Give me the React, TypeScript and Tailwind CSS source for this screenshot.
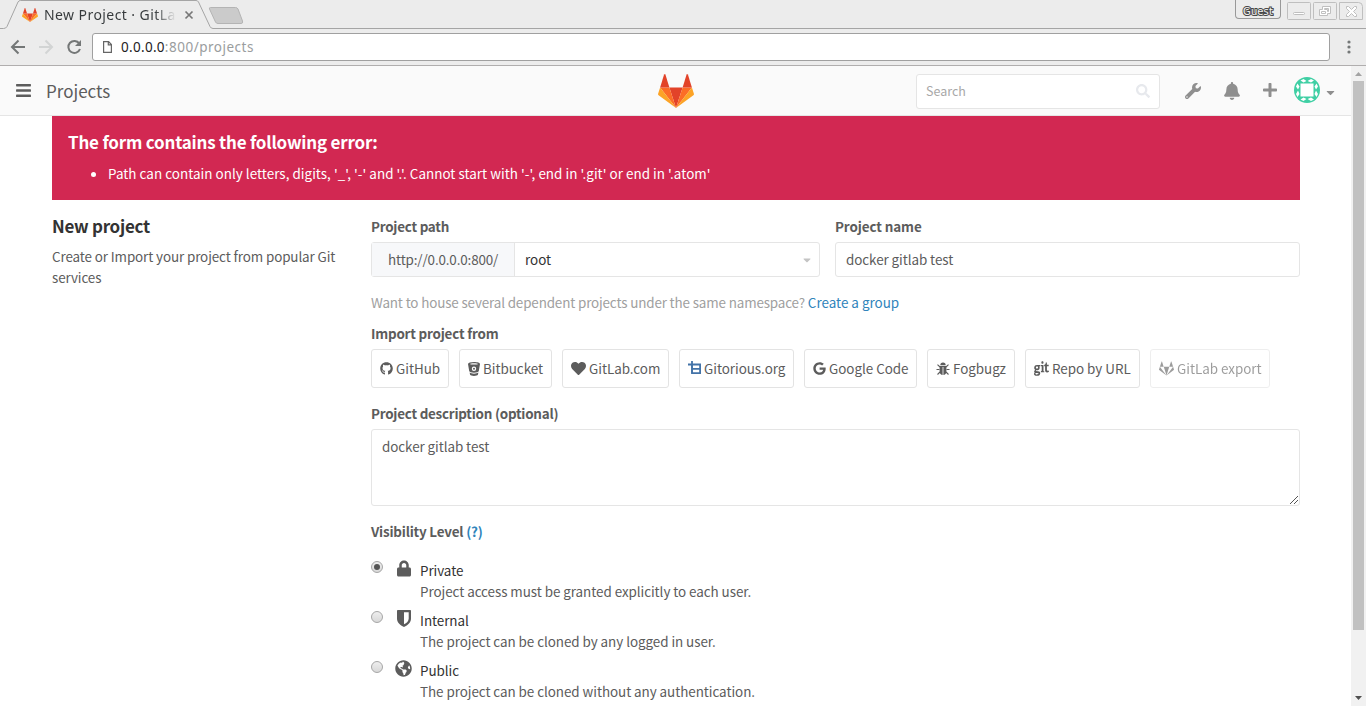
import type { ReactNode } from "react";
import {
  FaBars,
  FaBell,
  FaCaretDown,
  FaGit,
  FaGithub,
  FaGitlab,
  FaGlobeAmericas,
  FaGoogle,
  FaHeart,
  FaLock,
  FaPlus,
  FaSearch,
  FaWrench,
} from "react-icons/fa";

function Tanuki({ className }: { className: string }) {
  return (
    <svg className={className} viewBox="0 0 36 33" preserveAspectRatio="none">
      <path d="M18 33 11.4 13h13.2z" fill="#e24329" />
      <path d="M18 33 11.4 13H2.1z" fill="#fc6d26" />
      <path d="M2.1 13 .1 19.1c-.2.6 0 1.2.5 1.5L18 33z" fill="#fca326" />
      <path d="M2.1 13h9.3L7.4.6C7.2 0 6.300 0 6.100.6z" fill="#e24329" />
      <path d="M18 33l6.600-20h9.300z" fill="#fc6d26" />
      <path d="m33.900 13 2 6.100c.2.6 0 1.200-.5 1.500L18 33z" fill="#fca326" />
      <path d="M33.900 13h-9.300L28.600.6c.2-.6 1.100-.6 1.300 0z" fill="#e24329" />
    </svg>
  );
}

function Bitbucket() {
  return (
    <svg className="h-[14px] w-[12px]" viewBox="0 0 12 14">
      <path
        fill="currentColor"
        fillRule="evenodd"
        d="M0 2C0 .7 2.700 0 6 0s6 .7 6 2l-1.200 7c-.3 1-2.300 1.700-4.800 1.700S1.500 10 1.200 9zM2 1.900c0 .4 1.800.7 4 .7s4-.3 4-.7-1.800-.7-4-.7-4 .3-4 .7zm4 2.700a2.200 2.200 0 1 0 0 4.400 2.200 2.200 0 0 0 0-4.400zm0 1.200a1 1 0 1 1 0 2 1 1 0 0 1 0-2zM1.600 10.600c1 .7 2.600 1.100 4.400 1.100s3.400-.4 4.400-1.100l-.5 2.200C9.500 13.500 8 14 6 14s-3.500-.5-3.900-1.200z"
      />
    </svg>
  );
}

function Gitorious() {
  return (
    <svg className="-mt-[2px] h-[14px] w-[13px]" viewBox="0 0 13 14" fill="none" stroke="#4373a8">
      <path strokeWidth="1.800" d="M0 3.500h12.100v8.700H4V0M4 7.800h8" />
      <path strokeWidth="1.600" d="M4 3v9.300" />
    </svg>
  );
}

function Bug() {
  return (
    <svg className="h-[14px] w-[14px]" viewBox="0 0 14 14">
      <path fill="currentColor" d="M4.300 3.200a2.700 2.700 0 0 1 5.400 0zM3.600 4h6.800v5.500c0 2-1.400 3.500-3 3.500V5h-.8v8c-1.600 0-3-1.500-3-3.500z" />
      <path
        fill="none"
        stroke="currentColor"
        strokeWidth="1.100"
        d="M1.500 2.700 4 5M12.500 2.700 10 5M.5 7.500h3M13.500 7.500h-3M1.500 12.500 4 10M12.500 12.500 10 10"
      />
    </svg>
  );
}

function Shield() {
  return (
    <svg className="h-[17px] w-[14px]" viewBox="0 0 14 17">
      <path
        fill="currentColor"
        fillRule="evenodd"
        d="M.8 0h12.400c.5 0 .8.3.8.800V8.500c0 4-3 6.800-7 8.500-4-1.700-7-4.500-7-8.500V.8C0 .3.300 0 .8 0zM7 2.300v12c2.700-1.300 4.700-3.200 4.700-5.800V2.300z"
      />
    </svg>
  );
}

function Avatar() {
  return (
    <svg className="size-[26px]" viewBox="0 0 26 26">
      <defs>
        <clipPath id="round">
          <circle cx="13" cy="13" r="13" />
        </clipPath>
      </defs>
      <g clipPath="url(#round)">
        <path fill="#3fcfa4" d="M0 0h26v26H0z" />
        <path fill="#fff" d="M6.500 6.500h13v13h-13z" />
        <path
          fill="#fff"
          d="M6.500 3.500 9.500 2l3 2-3 1.500zM13.500 4 17 2l3 1.500L17 5.500zM6.500 22.500l3-2 3 1.500-3 2zM13.500 22l3.500-1.500 3 2-3 1.500zM3.500 6.500l2 3-1.500 3-2-3zM4 13.500l1.500 3.500-2 3L2 17zM22.500 6.500l-2 3 1.500 3 2-3zM22 13.500l-1.500 3.500 2 3L24 17z"
        />
      </g>
    </svg>
  );
}

function BrowserChrome() {
  return (
    <div className="flex h-[66px] flex-col border-b border-[#b0aeae] bg-[#ececec] font-['Noto_Sans',sans-serif]">
      <div className="relative h-[29px] shrink-0">
        <svg className="absolute inset-0 h-[29px] w-[1366px]" viewBox="0 0 1366 29" fill="none">
          <path stroke="#a5a5a5" d="M0 28.500h3.500q2.500 0 3.500-2L18 2q.8-1.500 2.500-1.500H196q1.700 0 2.500 1.500L210 26.500q1 2 3 2h1153" />
          <path fill="#cbcbcb" stroke="#b4b4b4" d="M210.500 7.500h25q1.700 0 2.500 1.500l4.500 12q.8 2.500-1.500 2.500h-23q-1.700 0-2.500-1.500L209.500 9q-.6-1.500 1-1.500z" />
          <path stroke="#777" strokeWidth="1.700" d="m185.500 11.500 7 7m0-7-7 7" />
        </svg>
        <div className="relative flex h-[29px] items-center">
          <Tanuki className="ml-[22px] mt-px h-[14px] w-4" />
          <div className="ml-[6px] mt-px w-[132px] overflow-hidden whitespace-nowrap bg-linear-to-r from-[#35393b] from-84% to-transparent to-100% bg-clip-text text-[14px] leading-5 tracking-[0.42px] text-transparent">
            New Project · GitLab
          </div>
          <div className="ml-auto flex h-[29px] items-start">
            <div className="mr-[6px] flex h-[19px] w-[46px] items-center justify-center rounded-b-[4px] border border-t-0 border-[#999] pt-[4px] font-['DejaVu_Sans',sans-serif] text-[10px] tracking-[0.1px] text-[#f4f4f4] [-webkit-text-stroke:2px_#484848] [paint-order:stroke_fill]">
              Guest
            </div>
            <svg className="mr-[3px] h-5 w-[76px]" viewBox="0 0 76 20" fill="none" stroke="#bfbfbf">
              <rect x=".5" y="2.500" width="23" height="17" rx="1" />
              <rect x="26.500" y="2.500" width="23" height="17" rx="1" />
              <path d="M52.500 2.500h19q4 0 4 4v13h-23z" />
              <rect x="6.500" y="12.500" width="11" height="2" rx="1" fill="#fff" />
              <path fill="#fff" d="M35.500 6.500h8v7h-3v2h-8v-6h3z" />
              <path d="M34.500 11.500h4v2h-4zM37.500 8.500h4v3h-1v-2h-3z" />
              <path fill="#fff" d="m59.500 6.500 2 0 3 3 3-3h2v2l-3 3 3 3v2h-2l-3-3-3 3h-2v-2l3-3-3-3z" />
            </svg>
          </div>
        </div>
      </div>
      <div className="flex flex-1 items-center">
        <svg className="h-9 w-[92px] shrink-0" viewBox="0 0 92 36" fill="none" strokeWidth="2">
          <path stroke="#747777" d="M25 18H12.500M18.500 11.500 12 18l6.500 6.500" />
          <path stroke="#d2d4d4" d="M39 18h12.500M45.500 11.500 52 18l-6.500 6.500" />
          <path stroke="#747777" d="M79.300 14.500a6 6 0 1 0 .7 5.500" />
          <path fill="#747777" d="M81 11v6h-6z" />
        </svg>
        <div className="flex h-7 w-[1238px] items-center rounded-[3px] border border-[#a0a0a0] bg-white pl-[10px]">
          <svg className="h-3 w-[9px]" viewBox="0 0 9 12" fill="none" stroke="#666">
            <path strokeWidth="1.200" d="M.6.6h5l2.800 3v7.800H.6zM5.300.6v3.200h3.100" />
          </svg>
          <span className="ml-[9px] text-[13.500px] tracking-[0.5px] text-[#9a9d9e]">
            <span className="tracking-[0.3px] text-[#1d2123]">0.0.0.0</span>:800/projects
          </span>
        </div>
        <svg className="ml-[16.500px] h-[14px] w-1" viewBox="0 0 4 14" fill="#747777">
          <circle cx="2" cy="2" r="1.600" />
          <circle cx="2" cy="7" r="1.600" />
          <circle cx="2" cy="12" r="1.600" />
        </svg>
      </div>
    </div>
  );
}

function ImportButton({ size, icon, children, faded }: { size: string; icon: ReactNode; children: ReactNode; faded?: boolean }) {
  return (
    <button
      className={`flex h-[39px] items-center whitespace-nowrap rounded-[3px] border border-[#e3e3e3] pl-[8px] tracking-[-0.03px] ${size} ${faded ? "opacity-60" : ""}`}
    >
      {icon}
      <span className="ml-[3px]">{children}</span>
    </button>
  );
}

function Level({ icon, title, text, checked }: { icon: ReactNode; title: string; text: string; checked?: boolean }) {
  return (
    <div className="flex h-[50px] tracking-[-0.055px]">
      <span className="mt-[11px] flex size-[12px] items-center justify-center rounded-full border border-[#a6a6a6] bg-linear-to-b from-[#eee] to-[#d8d8d8]">
        {checked && <span className="size-[6px] rounded-full bg-[#555]" />}
      </span>
      <span className="ml-3 flex h-[34px] w-[17px] justify-center pt-[10px]">{icon}</span>
      <div className="ml-[8px] pt-[10px]">
        <div className="text-[#333]">{title}</div>
        <div>{text}</div>
      </div>
    </div>
  );
}

export default function App() {
  return (
    <div className="h-[706px] w-[1366px] overflow-hidden bg-white font-['Noto_Sans_CJK_SC',sans-serif] text-[13.430px] leading-[21px] text-[#5c5c5c]">
      <BrowserChrome />
      <div className="flex h-[640px]">
        <main className="w-[1351px] overflow-hidden">
          <header className="flex h-[50px] items-center border-b border-[#e5e5e5] bg-[#fafafa]">
            <FaBars className="ml-[15px] size-[17px]" />
            <h1 className="ml-[14px] w-[612px] text-[17px]">Projects</h1>
            <Tanuki className="h-[34px] w-9" />
            <div className="ml-[222px] mt-[2px] flex h-[35px] w-[244px] items-center justify-between rounded-[3px] border border-[#e5e5e5] bg-white pb-[2px] pl-[9px] pr-[9px] text-[12.500px] text-[#a8a8a8]">
              Search
              <FaSearch className="size-[14px] text-[#e7e9ed]" />
            </div>
            <div className="flex items-center text-[#8f8f8f]">
              <FaWrench className="ml-[25px] size-4" />
              <FaBell className="ml-[22px] h-[18px] w-[18px]" />
              <FaPlus className="-mt-px ml-[21px] size-4" />
              <span className="-mt-px ml-[16px]">
                <Avatar />
              </span>
              <FaCaretDown className="ml-[4px] mt-[3px] size-[13px]" />
            </div>
          </header>
          <div className="mx-[52px] w-[1248px]">
            <section className="h-[84px] bg-[#d22852] px-4 pt-[15px] text-white">
              <h4 className="text-[17px] font-semibold tracking-[-0.21px]">The form contains the following error:</h4>
              <ul className="mt-[11px] list-disc pl-10 tracking-[0.035px]">
                <li>Path can contain only letters, digits, '_', '-' and '.'. Cannot start with '-', end in '.git' or end in '.atom'</li>
              </ul>
            </section>
            <div className="flex">
              <aside className="w-[319px] pt-[15px]">
                <h4 className="text-[17px] font-semibold tracking-[-0.27px] text-[#333]">New project</h4>
                <p className="mt-[10px] w-[300px] tracking-[-0.11px]">Create or Import your project from popular Git services</p>
              </aside>
              <form className="w-[929px] pt-[16px]">
                <div className="flex gap-[15px]">
                  <div className="w-[449px]">
                    <div className="font-semibold tracking-[-0.24px]">Project path</div>
                    <div className="mt-[5px] flex h-[35px] rounded-[3px] border border-[#e5e5e5]">
                      <div className="flex w-[143px] items-center border-r border-[#e5e5e5] bg-[#f7f8fa] pl-4 tracking-[-0.14px]">http://0.0.0.0:800/</div>
                      <div className="flex flex-1 items-center justify-between pl-[10px] pr-[6px] text-[#333]">
                        root
                        <FaCaretDown className="size-3 text-[#c4c4c4]" />
                      </div>
                    </div>
                  </div>
                  <div className="w-[465px]">
                    <div className="font-semibold tracking-[-0.1px]">Project name</div>
                    <div className="mt-[5px] flex h-[35px] items-center rounded-[3px] border border-[#e5e5e5] pl-[10px] tracking-[-0.07px]">docker gitlab test</div>
                  </div>
                </div>
                <p className="mt-[15px] text-[#a0a0a0]">
                  <span className="tracking-[-0.145px]">Want to house several dependent projects under the same namespace? </span>
                  <a className="text-[#3084bb]">Create a group</a>
                </p>
                <div className="mt-[10px] font-semibold tracking-[-0.2px]">Import project from</div>
                <div className="mt-[5px] flex gap-[10px]">
                  <ImportButton size="w-[78px]" icon={<FaGithub className="size-[13px]" />}>GitHub</ImportButton>
                  <ImportButton size="w-[93px]" icon={<Bitbucket />}>Bitbucket</ImportButton>
                  <ImportButton size="w-[107px]" icon={<FaHeart className="size-[15px]" />}>GitLab.com</ImportButton>
                  <ImportButton size="w-[115px]" icon={<Gitorious />}>Gitorious.org</ImportButton>
                  <ImportButton size="w-[113px]" icon={<FaGoogle className="size-[13px]" />}>Google Code</ImportButton>
                  <ImportButton size="w-[88px]" icon={<Bug />}>Fogbugz</ImportButton>
                  <ImportButton size="w-[115px]" icon={<FaGit className="size-[15px] scale-y-[1.200]" />}>Repo by URL</ImportButton>
                  <ImportButton size="w-[120px]" faded icon={<FaGitlab className="size-[15px]" />}>GitLab export</ImportButton>
                </div>
                <div className="mt-[15px] font-semibold tracking-[-0.24px]">Project description (optional)</div>
                <div className="mt-[5px] flex h-[77px] justify-between rounded-[3px] border border-[#e5e5e5] pl-[10px] pr-px pt-[6px] tracking-[-0.07px]">
                  docker gitlab test
                  <svg className="mb-px size-[8px] self-end" viewBox="0 0 8 8" stroke="#555">
                    <path d="M0 8 8 0M4 8l4-4" />
                  </svg>
                </div>
                <div className="mt-[15px] font-semibold tracking-[-0.2px]">
                  Visibility Level <a className="text-[#3084bb]">(?)</a>
                </div>
                <div className="mt-[8px]">
                  <Level checked icon={<FaLock className="h-[17px] w-[14px]" />} title="Private" text="Project access must be granted explicitly to each user." />
                  <Level icon={<Shield />} title="Internal" text="The project can be cloned by any logged in user." />
                  <Level icon={<FaGlobeAmericas className="size-[17px]" />} title="Public" text="The project can be cloned without any authentication." />
                </div>
              </form>
            </div>
          </div>
        </main>
        <div className="flex w-[15px] flex-col items-center bg-[#f1f1f1]">
          <svg className="h-[15px] w-[15px]" viewBox="0 0 15 15">
            <path fill="#a3a3a3" d="M4 10h7L7.500 6z" />
          </svg>
          <div className="h-[549px] w-[11px] bg-[#c1c1c1]" />
          <svg className="mt-auto h-[15px] w-[15px]" viewBox="0 0 15 15">
            <path fill="#505050" d="M4 5h7L7.500 9z" />
          </svg>
        </div>
      </div>
    </div>
  );
}
